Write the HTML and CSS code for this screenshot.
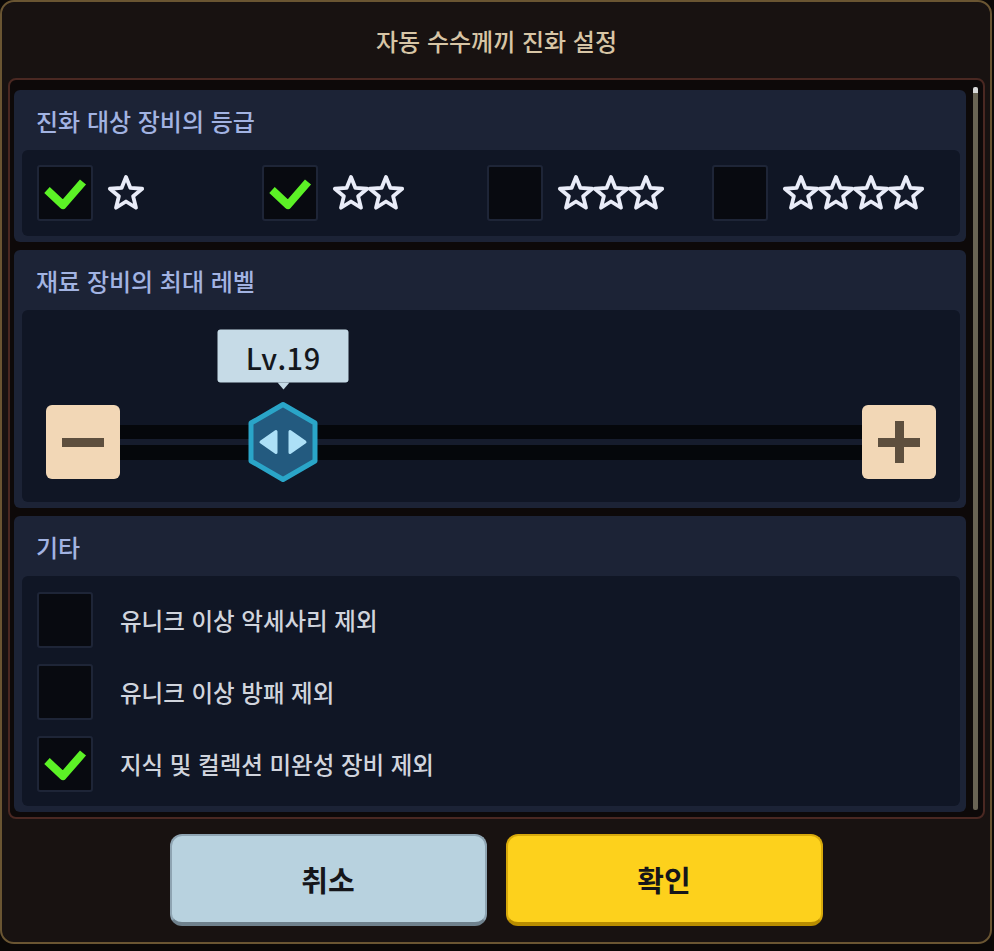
FILE: index.html
```html
<!DOCTYPE html>
<html lang="ko">
<head>
<meta charset="utf-8">
<title>자동 수수께끼 진화 설정</title>
<link rel="stylesheet" href="styles.css">
</head>
<body>
<svg class="defs" width="0" height="0" aria-hidden="true">
  <defs>
    <symbol id="star" viewBox="0 0 40 40">
      <path d="M20 4 L24.41 14.93 L36.17 15.75 L27.13 23.32 L29.99 34.75 L20 28.5 L10.01 34.75 L12.87 23.32 L3.83 15.75 L15.59 14.93 Z" fill="#121828" stroke="#e9ecf8" stroke-width="3.8" stroke-linejoin="round"/>
    </symbol>
    <symbol id="check" viewBox="0 0 56 56">
      <polyline points="10,25 26,40 46,17" fill="none" stroke="#5cf226" stroke-width="8" stroke-linejoin="round"/>
    </symbol>
  </defs>
</svg>

<div class="dialog">
  <div class="title">자동 수수께끼 진화 설정</div>

  <div class="panel">
    <div class="sections">
      <section class="section">
        <div class="sec-head">진화 대상 장비의 등급</div>
        <div class="sec-body grades">
          <div class="grade">
            <span class="cb"><svg class="chk"><use href="#check"/></svg></span>
            <span class="stars"><svg class="star"><use href="#star"/></svg></span>
          </div>
          <div class="grade">
            <span class="cb"><svg class="chk"><use href="#check"/></svg></span>
            <span class="stars"><svg class="star"><use href="#star"/></svg><svg class="star"><use href="#star"/></svg></span>
          </div>
          <div class="grade">
            <span class="cb"></span>
            <span class="stars"><svg class="star"><use href="#star"/></svg><svg class="star"><use href="#star"/></svg><svg class="star"><use href="#star"/></svg></span>
          </div>
          <div class="grade">
            <span class="cb"></span>
            <span class="stars"><svg class="star"><use href="#star"/></svg><svg class="star"><use href="#star"/></svg><svg class="star"><use href="#star"/></svg><svg class="star"><use href="#star"/></svg></span>
          </div>
        </div>
      </section>

      <section class="section">
        <div class="sec-head">재료 장비의 최대 레벨</div>
        <div class="sec-body level">
          <div class="slider">
            <button class="step" aria-label="감소"><span class="minus"></span></button>
            <div class="track">
              <div class="handle" style="left: 22%;">
                <div class="tip">Lv.19</div>
                <svg class="hex" viewBox="0 0 70 81" width="70" height="81">
                  <polygon points="35,3 67,21.5 67,59.5 35,78 3,59.5 3,21.5" fill="#235a7f" stroke="#2aa5c8" stroke-width="5" stroke-linejoin="round"/>
                  <polygon points="13,40.5 28,30 28,51" fill="#ade0f7" stroke="#ade0f7" stroke-width="3" stroke-linejoin="round"/>
                  <polygon points="57,40.5 42,30 42,51" fill="#ade0f7" stroke="#ade0f7" stroke-width="3" stroke-linejoin="round"/>
                </svg>
              </div>
            </div>
            <button class="step" aria-label="증가"><span class="plus"></span></button>
          </div>
        </div>
      </section>

      <section class="section">
        <div class="sec-head">기타</div>
        <div class="sec-body etc">
          <div class="row"><span class="cb"></span><span class="label">유니크 이상 악세사리 제외</span></div>
          <div class="row"><span class="cb"></span><span class="label">유니크 이상 방패 제외</span></div>
          <div class="row"><span class="cb"><svg class="chk"><use href="#check"/></svg></span><span class="label">지식 및 컬렉션 미완성 장비 제외</span></div>
        </div>
      </section>
    </div>
    <div class="scrollbar"></div>
  </div>

  <div class="actions">
    <button class="btn cancel">취소</button>
    <button class="btn ok">확인</button>
  </div>
</div>
</body>
</html>
```

FILE: styles.css
```css
* { box-sizing: border-box; }

html, body {
  margin: 0;
  padding: 0;
}

body {
  width: 994px;
  height: 951px;
  background: #0b0807;
  font-family: "Noto Sans CJK KR", "Noto Sans", sans-serif;
  overflow: hidden;
}

.defs {
  position: absolute;
  width: 0;
  height: 0;
}

.dialog {
  width: 992px;
  height: 944px;
  border: 2px solid #6a5532;
  border-radius: 14px;
  background: #181211;
  padding: 0 5px 0 6px;
  display: flex;
  flex-direction: column;
}

.title {
  height: 76px;
  display: flex;
  align-items: center;
  justify-content: center;
  font-size: 24px;
  font-weight: 500;
  color: #d7c5a5;
}

.panel {
  height: 741px;
  border: 2px solid #4a2822;
  border-radius: 8px;
  background: #0d0909;
  padding: 10px 5px 5px 4px;
  display: flex;
}

.sections {
  width: 952px;
  display: flex;
  flex-direction: column;
  gap: 8px;
}

.scrollbar {
  width: 5px;
  margin: -3px 0 2px 7px;
  background: linear-gradient(#d9d9d9 0 6px, #6a6454 6px);
  border-radius: 2px;
}

.section {
  background: #1c2336;
  border-radius: 6px;
  padding: 0 6px 6px 8px;
}

.sec-head {
  height: 60px;
  display: flex;
  align-items: center;
  padding-left: 14px;
  font-size: 24px;
  font-weight: 500;
  color: #a2b3e2;
}

.sec-body {
  background: #101625;
  border-radius: 6px;
}

.cb {
  width: 56px;
  height: 56px;
  flex: 0 0 56px;
  background: #080a10;
  border: 2px solid #1e2537;
  border-radius: 3px;
  display: flex;
  align-items: center;
  justify-content: center;
}

.chk {
  width: 56px;
  height: 56px;
  margin: -2px;
}

/* grades */
.grades {
  height: 86px;
  padding: 15px;
  display: grid;
  grid-template-columns: repeat(4, 225px);
}

.grade {
  display: flex;
  align-items: center;
  gap: 13px;
}

.stars {
  display: flex;
  align-items: center;
}

.star {
  width: 40px;
  height: 40px;
}

.star + .star {
  margin-left: -5px;
}

/* level slider */
.level {
  height: 192px;
  padding: 95px 24px 0 24px;
}

.slider {
  display: flex;
  align-items: center;
  height: 74px;
}

.step {
  width: 74px;
  height: 74px;
  flex: 0 0 74px;
  border: none;
  border-radius: 6px;
  background: #f2d7b6;
  padding: 0;
  position: relative;
  display: flex;
  align-items: center;
  justify-content: center;
}

.minus {
  width: 42px;
  height: 9px;
  background: #5e4f3e;
}

.plus {
  width: 42px;
  height: 42px;
  background:
    linear-gradient(#5e4f3e, #5e4f3e) center / 42px 9px no-repeat,
    linear-gradient(#5e4f3e, #5e4f3e) center / 9px 42px no-repeat;
}

.track {
  flex: 1;
  height: 35px;
  position: relative;
  background: linear-gradient(#05070b 0 14px, #161c2d 14px 20px, #05070b 20px 35px);
}

.handle {
  position: absolute;
  top: 50%;
  width: 70px;
  height: 81px;
  transform: translate(-50%, -50%);
}

.hex {
  display: block;
}

.tip {
  position: absolute;
  bottom: calc(100% + 19px);
  left: 50%;
  transform: translateX(-50%);
  width: 131px;
  height: 53px;
  background: #c6dbe7;
  border-radius: 3px;
  color: #14171d;
  font-size: 29px;
  font-weight: 500;
  display: flex;
  align-items: center;
  justify-content: center;
  letter-spacing: 0.5px;
}

.tip::after {
  content: "";
  position: absolute;
  top: 100%;
  left: 50%;
  margin-left: -6px;
  border-left: 6px solid transparent;
  border-right: 6px solid transparent;
  border-top: 7px solid #c6dbe7;
}

/* etc */
.etc {
  height: 230px;
  padding: 16px 15px;
  display: flex;
  flex-direction: column;
  gap: 16px;
}

.row {
  display: flex;
  align-items: center;
  gap: 27px;
}

.label {
  font-size: 23.5px;
  font-weight: 500;
  color: #d0d4dd;
}

/* actions */
.actions {
  margin-top: 15px;
  display: flex;
  justify-content: center;
  gap: 19px;
  padding-right: 1px;
}

.btn {
  width: 317px;
  height: 92px;
  border-radius: 12px;
  font-family: "Noto Sans CJK KR", "Noto Sans", sans-serif;
  font-size: 29px;
  font-weight: 700;
  color: #15161a;
  padding: 0;
}

.cancel {
  background: #b8d2df;
  border: 2px solid #8ea4b2;
  border-bottom: 4px solid #6f818d;
}

.ok {
  background: #fdd11c;
  border: 2px solid #d7a90c;
  border-bottom: 4px solid #b98d00;
}
```
